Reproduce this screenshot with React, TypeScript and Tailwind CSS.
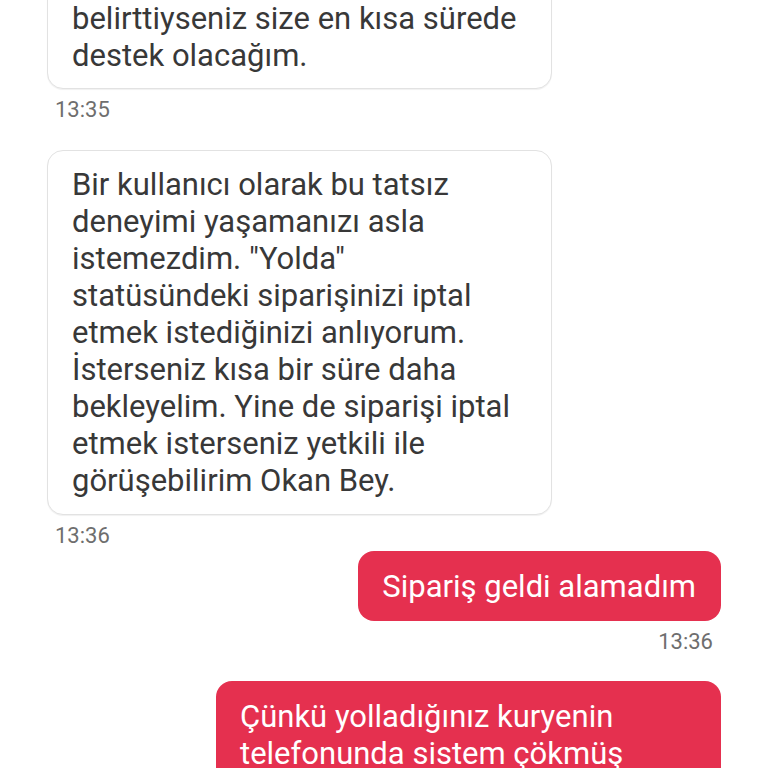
const received = "border border-[#e2e2e2] bg-white text-[#383838] shadow-[0_1px_1px_rgba(0,0,0,0.06)]";
const sent = "bg-[#e5304f] text-white";

export default function App() {
  return (
    <div className="h-[768px] w-[768px] overflow-hidden bg-white font-['Roboto',sans-serif]">
      <div className="flex flex-col px-[47px] text-[31px] leading-[37px]">
        {/* received */}
        <div className={`-mt-[16px] self-start w-[505px] rounded-[16px] px-6 pb-[14px] pt-[15px] ${received}`}>
          belirttiyseniz size en kısa sürede
          <br />
          destek olacağım.
        </div>
        <span className="mt-[8px] pl-[8px] text-[22px] leading-[26px] text-[#6e6e6e]">13:35</span>

        <div className={`mt-[27px] self-start w-[505px] rounded-[16px] px-6 pb-[15px] pt-[15px] ${received}`}>
          Bir kullanıcı olarak bu tatsız
          <br />
          deneyimi yaşamanızı asla
          <br />
          istemezdim. "Yolda"
          <br />
          statüsündeki siparişinizi iptal
          <br />
          etmek istediğinizi anlıyorum.
          <br />
          İsterseniz kısa bir süre daha
          <br />
          bekleyelim. Yine de siparişi iptal
          <br />
          etmek isterseniz yetkili ile
          <br />
          görüşebilirim Okan Bey.
        </div>
        <span className="mt-[8px] pl-[8px] text-[22px] leading-[26px] text-[#6e6e6e]">13:36</span>

        {/* sent */}
        <div className={`mt-[2px] self-end rounded-[16px] pl-[24px] pr-[25px] pb-[16px] pt-[17px] ${sent}`}>Sipariş geldi alamadım</div>
        <span className="mt-[8px] self-end pr-[8px] text-[22px] leading-[26px] text-[#6e6e6e]">13:36</span>

        <div className={`mt-[26px] self-end w-[505px] rounded-[16px] px-6 pb-[24px] pt-[17px] ${sent}`}>
          Çünkü yolladığınız kuryenin
          <br />
          telefonunda sistem çökmüş
        </div>
      </div>
    </div>
  );
}
